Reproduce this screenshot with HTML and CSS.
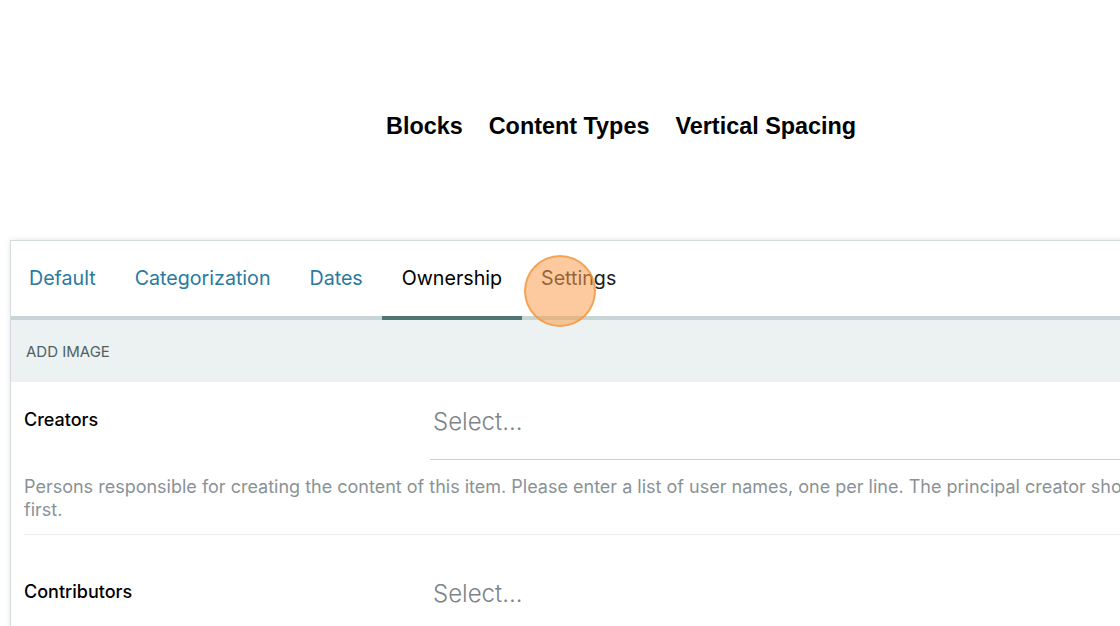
FILE: index.html
```html
<!DOCTYPE html>
<html lang="en">
<head>
<meta charset="utf-8">
<title>Ownership</title>
<link rel="stylesheet" href="styles.css">
</head>
<body>
<header class="top">
  <nav class="top-nav">
    <span class="top-link">Blocks</span>
    <span class="top-link">Content Types</span>
    <span class="top-link">Vertical Spacing</span>
  </nav>
</header>
<section class="panel">
  <div class="tabs">
    <span class="tab tab-first">Default</span>
    <span class="tab">Categorization</span>
    <span class="tab">Dates</span>
    <span class="tab tab-active">Ownership</span>
    <span class="tab tab-hover">Settings</span>
  </div>
  <div class="band">ADD IMAGE</div>
  <div class="field">
    <div class="field-row">
      <label class="field-label">Creators</label>
      <div class="select">Select...</div>
    </div>
    <p class="help">Persons responsible for creating the content of this item. Please enter a list of user names, one per line. The principal creator should come first.</p>
  </div>
  <div class="field field-second">
    <div class="field-row">
      <label class="field-label">Contributors</label>
      <div class="select select-plain">Select...</div>
    </div>
  </div>
</section>
<div class="cursor-dot"></div>
</body>
</html>
```
FILE: styles.css
```css
html, body {
  margin: 0;
  padding: 0;
  background: #ffffff;
  width: 1120px;
  height: 626px;
  overflow: hidden;
  font-family: "Inter", "Noto Sans", sans-serif;
}

.top {
  height: 240px;
  box-sizing: border-box;
  padding-top: 111px;
}

.top-nav {
  display: flex;
  gap: 26px;
  padding-left: 386px;
}

.top-link {
  font-family: "Liberation Sans", Arial, sans-serif;
  font-weight: 700;
  font-size: 23.4px;
  line-height: 30px;
  color: #000;
}

.panel {
  margin-left: 10px;
  width: 1200px;
  border-top: 1px solid #d3dbdd;
  border-left: 1px solid #d3dbdd;
  box-shadow: 0 0 6px rgba(0, 0, 0, 0.10);
  background: #fff;
  height: 420px;
}

.tabs {
  display: flex;
  height: 75px;
  border-bottom: 4px solid #c8d5d7;
}

.tab {
  display: flex;
  align-items: center;
  padding: 0 19.5px 2px;
  font-size: 19.65px;
  color: #2a7aa0;
}

.tab-first {
  padding-left: 18px;
}

.tab-active {
  color: #000;
  border-bottom: 4px solid #507674;
  margin-bottom: -4px;
}

.tab-hover {
  color: #1c1c1c;
}

.band {
  height: 62px;
  background: #ecf1f1;
  display: flex;
  align-items: center;
  padding-left: 15px;
  font-size: 15px;
  color: #4e6163;
}

.field {
  margin: 0 0 0 13px;
  padding-top: 15px;
  padding-bottom: 13px;
  border-bottom: 1px solid #ececec;
}

.field-row {
  display: grid;
  grid-template-columns: 406px 1fr;
}

.field-label {
  font-size: 18px;
  font-weight: 500;
  line-height: 26px;
  padding-top: 10px;
  color: #000;
}

.select {
  height: 62px;
  line-height: 50px;
  padding-left: 3px;
  font-size: 24px;
  font-weight: 300;
  color: #7d8387;
  border-bottom: 1px solid #c9d3d5;
}

.select-plain {
  border-bottom: none;
}

.help {
  margin: 15px 0 0;
  font-size: 18px;
  line-height: 23px;
  color: #8a9296;
  font-weight: 400;
}

.field-second {
  padding-top: 34px;
  border-bottom: none;
}

.cursor-dot {
  position: absolute;
  left: 524px;
  top: 255px;
  width: 68px;
  height: 68px;
  border-radius: 50%;
  background: rgba(250, 158, 78, 0.55);
  border: 2px solid rgba(242, 150, 60, 0.75);
}
```
